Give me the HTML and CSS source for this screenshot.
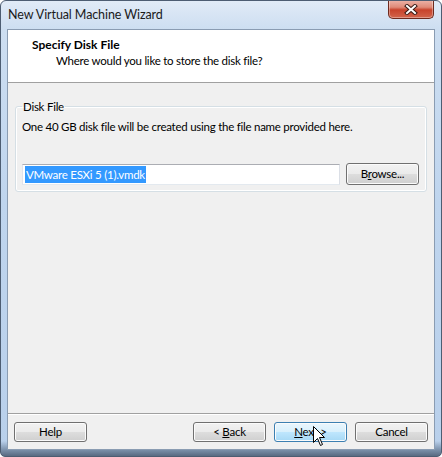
FILE: index.html
```html
<!DOCTYPE html>
<html>
<head>
<meta charset="utf-8">
<title>New Virtual Machine Wizard</title>
<link rel="stylesheet" href="styles.css">
</head>
<body>
<div class="window">
  <div class="titlebar">
    <span class="title">New Virtual Machine Wizard</span>
    <button class="close" aria-label="Close">
      <svg width="14" height="11" viewBox="0 0 14 11">
        <path d="M3 2 L11 9 M11 2 L3 9" stroke="#3b1a14" stroke-width="4" stroke-linecap="square" fill="none"/>
        <path d="M3 2 L11 9 M11 2 L3 9" stroke="#ffffff" stroke-width="2" stroke-linecap="square" fill="none"/>
      </svg>
    </button>
  </div>
  <div class="client">
    <div class="header">
      <div class="h-title">Specify Disk File</div>
      <div class="h-sub">Where would you like to store the disk file?</div>
    </div>
    <div class="body">
      <fieldset class="group">
        <legend>Disk File</legend>
        <p class="desc">One 40 GB disk file will be created using the file name provided here.</p>
        <div class="file-row">
          <div class="textbox"><span class="sel">VMware ESXi 5 (1).vmdk</span></div>
          <button class="btn browse">B<u>r</u>owse...</button>
        </div>
      </fieldset>
    </div>
    <div class="footer">
      <button class="btn">Help</button>
      <div class="spacer"></div>
      <button class="btn">&lt; <u>B</u>ack</button>
      <button class="btn hover"><u>N</u>ext &gt;</button>
      <button class="btn">Cancel</button>
    </div>
  </div>
  <svg class="cursor" width="13" height="21" viewBox="0 0 13 21">
    <path d="M0.5 0.5 L0.5 16.5 L4.5 12.5 L7.5 19.5 L9.5 18.5 L6.5 11.5 L11.5 11.5 Z" fill="#ffffff" stroke="#000000" stroke-width="1"/>
  </svg>
</div>
</body>
</html>
```
FILE: styles.css
```css
* { box-sizing: border-box; }
html, body { margin: 0; padding: 0; }
body {
  width: 442px;
  height: 457px;
  overflow: hidden;
  background: #ffffff;
  font-family: "Lato", "Open Sans", "DejaVu Sans", sans-serif;
  font-size: 11.5px;
  letter-spacing: -0.25px;
  color: #000000;
}
.window {
  position: relative;
  width: 442px;
  height: 457px;
  border: 1px solid #4d5d72;
  border-radius: 6px 6px 5px 5px;
  background:
    linear-gradient(180deg, rgba(255,255,255,0) 440px, rgba(70,90,115,0.55) 449px, rgba(40,55,75,0.7) 456px),
    linear-gradient(180deg, #e1ebf7 0px, #cddef1 28px, #bfd5ee 200px, #b9d0eb 100%);
  display: flex;
  flex-direction: column;
  overflow: hidden;
}
.titlebar {
  height: 28px;
  display: flex;
  justify-content: space-between;
  align-items: flex-start;
  padding: 0 7px 0 7px;
}
.title {
  padding-top: 6px;
  line-height: 15px;
  font-size: 12.5px;
  letter-spacing: -0.1px;
  color: #1a1a1a;
}
.close {
  width: 46px;
  height: 19px;
  margin-top: -1px;
  padding: 0;
  border: 1px solid #6e2a1e;
  border-top: none;
  border-radius: 0 0 5px 5px;
  background: linear-gradient(180deg, #edb5aa 0%, #df8a78 40%, #c8432c 55%, #d2654c 100%);
  box-shadow: inset 0 0 0 1px rgba(255,255,255,0.35);
  display: flex;
  align-items: center;
  justify-content: center;
}
.client {
  flex: 1;
  margin: 0 6px 6px 6px;
  border: 1px solid #8a9cb2;
  background: #f0f0f0;
  display: flex;
  flex-direction: column;
}
.header {
  height: 53px;
  background: #ffffff;
  border-bottom: 1px solid #a0a0a0;
  padding: 7px 0 0 24px;
  line-height: 15px;
}
.h-title { font-weight: bold; font-size: 12px; letter-spacing: 0; }
.h-sub { margin-top: 1px; padding-left: 24px; }
.body {
  flex: 1;
  padding: 16px 7px 0 7px;
}
.group {
  margin: 0;
  padding: 0 7px 6px 6px;
  border: 1px solid #d5dfe5;
  border-radius: 3px;
  box-shadow: inset 0 0 0 1px #ffffff;
}
.group legend {
  padding: 0 1px;
  line-height: 15px;
}
.desc {
  margin: 5px 0 0 0;
  line-height: 15px;
}
.file-row {
  display: flex;
  align-items: center;
  gap: 6px;
  margin-top: 29px;
}
.textbox {
  flex: 1;
  height: 21px;
  background: #ffffff;
  border: 1px solid #abadb3;
  border-color: #abadb3 #dbdfe6 #e3e9ef #e2e3ea;
  padding: 1px 2px;
  display: flex;
  align-items: center;
}
.sel {
  background: #3399ff;
  color: #ffffff;
  line-height: 17px;
  padding: 0 1px;
}
.btn {
  width: 73px;
  height: 20px;
  padding: 0;
  font-family: inherit;
  font-size: 11.5px;
  letter-spacing: -0.25px;
  line-height: 16px;
  color: #000000;
  border: 1px solid #707070;
  border-radius: 3px;
  background: linear-gradient(180deg, #f2f2f2 0%, #ebebeb 48%, #dddddd 52%, #cfcfcf 100%);
  box-shadow: inset 0 0 0 1px #fbfbfb;
}
.btn u { text-decoration: underline; text-underline-offset: 1px; }
.browse { height: 22px; }
.btn.hover {
  border-color: #3c7fb1;
  background: linear-gradient(180deg, #eaf6fd 0%, #d9f0fc 48%, #bee6fd 52%, #a7d9f5 100%);
}
.footer {
  display: flex;
  align-items: flex-start;
  gap: 8px;
  border-top: 1px solid #a0a0a0;
  box-shadow: inset 0 1px 0 #ffffff;
  padding: 8px 6px 6px 6px;
  height: 36px;
}
.spacer { flex: 1; }
.cursor {
  position: absolute;
  left: 312px;
  top: 425px;
}
```
